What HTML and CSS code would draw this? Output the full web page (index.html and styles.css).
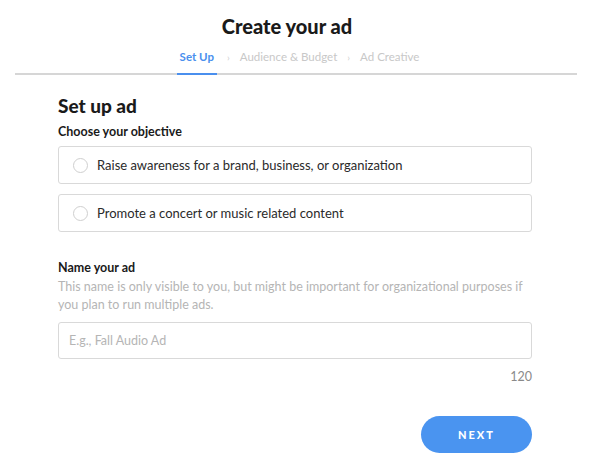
FILE: index.html
```html
<!DOCTYPE html>
<html>
<head>
<meta charset="utf-8">
<link rel="stylesheet" href="styles.css">
</head>
<body>
<header class="top">
  <h1 class="title">Create your ad</h1>
  <nav class="steps">
    <span class="step active">Set Up</span>
    <span class="sep">›</span>
    <span class="step">Audience &amp; Budget</span>
    <span class="sep">›</span>
    <span class="step">Ad Creative</span>
  </nav>
</header>
<main class="content">
  <h2 class="section-title">Set up ad</h2>
  <div class="label">Choose your objective</div>
  <div class="options">
    <label class="option"><span class="radio"></span><span>Raise awareness for a brand, business, or organization</span></label>
    <label class="option"><span class="radio"></span><span>Promote a concert or music related content</span></label>
  </div>
  <div class="label name-label">Name your ad</div>
  <p class="help">This name is only visible to you, but might be important for organizational purposes if you plan to run multiple ads.</p>
  <div class="input"><span class="placeholder">E.g., Fall Audio Ad</span></div>
  <div class="counter">120</div>
  <div class="actions"><button class="next">NEXT</button></div>
</main>
</body>
</html>
```

FILE: styles.css
```css
* { box-sizing: border-box; }
body {
  margin: 0;
  background: #fff;
  font-family: "Lato", "Noto Sans", sans-serif;
  color: #222;
}
.top {
  margin: 0 13px 0 15px;
  border-bottom: 2px solid #d6d6d6;
  display: flex;
  flex-direction: column;
  align-items: center;
}
.title {
  margin: 14px 18px 0 0;
  font-size: 20px;
  line-height: 24px;
  font-weight: 900;
  color: #1a1a1a;
}
.steps {
  margin: 12px 0 0 4px;
  display: flex;
  gap: 10px;
  font-size: 11.5px;
  font-weight: 400;
  color: #c8c8c8;
}
.step {
  padding-bottom: 9px;
  line-height: 14px;
}
.step.active {
  color: #4a8fee;
  font-weight: 700;
  font-size: 11.5px;
  border-bottom: 2px solid #4a8fee;
  margin-bottom: -2px;
  padding: 0 3px 9px;
}
.sep {
  font-size: 10px;
  line-height: 14px;
  color: #cfcfcf;
}
.content {
  margin-left: 58px;
  width: 474px;
}
.section-title {
  margin: 19px 0 0;
  font-size: 19px;
  line-height: 24px;
  font-weight: 900;
  color: #1a1a1a;
}
.label {
  margin-top: 6px;
  font-size: 12.5px;
  font-weight: 700;
  line-height: 16px;
  color: #1a1a1a;
}
.options {
  margin-top: 6px;
  display: flex;
  flex-direction: column;
  gap: 10px;
}
.option {
  display: flex;
  align-items: center;
  gap: 9px;
  height: 38px;
  padding-left: 14px;
  border: 1px solid #d9d9d9;
  border-radius: 3px;
  font-size: 13px;
  color: #2a2a2a;
}
.radio {
  width: 15px;
  height: 15px;
  border: 1px solid #cfcfcf;
  border-radius: 50%;
  flex: none;
}
.name-label {
  margin-top: 28px;
}
.help {
  margin: 2px 0 0;
  font-size: 12.5px;
  line-height: 18px;
  color: #b5b5b5;
}
.input {
  margin-top: 8px;
  height: 37px;
  border: 1px solid #d9d9d9;
  border-radius: 3px;
  display: flex;
  align-items: center;
  padding-left: 10px;
}
.placeholder {
  font-size: 12.5px;
  color: #b5b5b5;
}
.counter {
  margin-top: 10px;
  text-align: right;
  font-size: 12.5px;
  color: #8a8a8a;
}
.actions {
  display: flex;
  justify-content: flex-end;
  margin-top: 32px;
}
.next {
  width: 111px;
  height: 37px;
  border: none;
  border-radius: 19px;
  background: #4a94f0;
  color: #fff;
  font-family: inherit;
  font-size: 11px;
  font-weight: 900;
  letter-spacing: 2px;
}
```
